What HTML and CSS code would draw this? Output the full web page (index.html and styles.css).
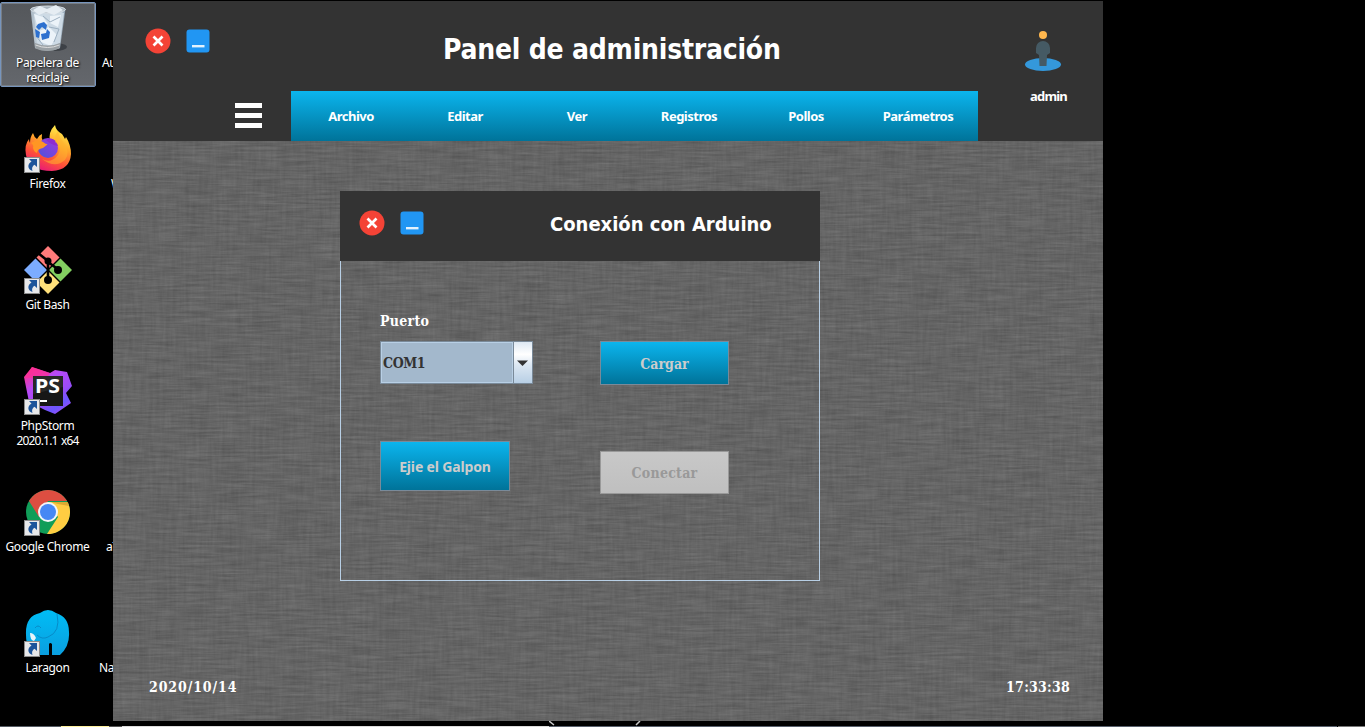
FILE: index.html
```html
<!DOCTYPE html>
<html lang="es">
<head>
<meta charset="utf-8">
<title>Panel de administración</title>
<link rel="stylesheet" href="styles.css">
</head>
<body>
<svg class="defs" width="0" height="0">
  <defs>
    <symbol id="shortcut" viewBox="0 0 16 16">
      <path d="M0 0h16v16H0z" fill="#8b8b8b"/><path d="M1 1h14v14H1z" fill="#e7e8ea"/>
      <path d="M5 2h8v8l-2.500-2.300C8.500 9 7.400 11 8.500 14 4 13 2.500 7.500 7.500 4.600z" fill="#1c549b"/>
    </symbol>
    <symbol id="close" viewBox="0 0 26 26">
      <circle cx="13" cy="13" r="12.500" fill="#f44336"/>
      <path d="M8.500 8.500l9 9M17.500 8.500l-9 9" stroke="#fff" stroke-width="2.700"/>
    </symbol>
    <symbol id="minimize" viewBox="0 0 24 24">
      <rect x=".5" y=".5" width="23" height="23" rx="3" fill="#2196f3"/>
      <path d="M6 17.200h12.500" stroke="#e3f2fd" stroke-width="2.400"/>
    </symbol>
    <linearGradient id="fox" x1=".75" y1="0" x2=".3" y2="1"><stop offset="0" stop-color="#fff44f"/><stop offset=".4" stop-color="#ffa52a"/><stop offset=".7" stop-color="#ff5138"/><stop offset="1" stop-color="#e6147e"/></linearGradient>
    <linearGradient id="globe" x1="0" y1="1" x2="1" y2="0"><stop offset="0" stop-color="#4a54dc"/><stop offset="1" stop-color="#a436dc"/></linearGradient>
    <linearGradient id="storm" x1=".2" y1="0" x2=".9" y2="1"><stop offset="0" stop-color="#ff318c"/><stop offset=".3" stop-color="#b74af7"/><stop offset=".6" stop-color="#9c4cf5"/><stop offset=".8" stop-color="#6b57ff"/><stop offset="1" stop-color="#b345f1"/></linearGradient>
    <linearGradient id="elephant" x1="0" y1="0" x2="0" y2="1"><stop offset="0" stop-color="#00bdf5"/><stop offset="1" stop-color="#0a9fe0"/></linearGradient>
    <linearGradient id="bin" x1="0" y1="0" x2="1" y2="0"><stop offset="0" stop-color="#a9b7c3"/><stop offset=".4" stop-color="#dfe8f0"/><stop offset="1" stop-color="#8fa1b1"/></linearGradient>
  </defs>
</svg>

<nav class="desktop">
  <div class="item selected">
    <svg class="icon" viewBox="0 0 48 48">
      <ellipse cx="31" cy="43" rx="12" ry="4" fill="#30353a" opacity=".7"/>
      <path d="M6.500 5L11 44q13 5 25 0l5.500-39z" fill="url(#bin)"/>
      <path d="M10 10l8-4 7 5 7-5 8 3-4 30-11 4-12-4z" fill="#cddae5"/>
      <path d="M10 10l9 3 5 7-10 5zM26 12l11-1-3 12-8-4zM15 27l10-4 8 8-6 11-10-4z" fill="#ecf3f9"/>
      <path d="M19 12l7 6 10-5M25 23l10 2-5 13M12 32l7 9" stroke="#9db0c1" fill="none"/>
      <path d="M14 20l6-2 3 3-1 5-4-3-3 3-3-3zM11 25l5 3-1 6-3-1zM17 30l5-1 1-4 3 3-1 6-7 2z" fill="#2d70cf"/>
      <ellipse cx="24" cy="5.500" rx="17.500" ry="3.500" fill="#a9b5bf" stroke="#d6dde3"/>
      <path d="M9 6l7-4 7 3 9-4 7 5-9 5-8-3-7 3z" fill="#e6edf3"/>
      <path d="M11 39q13 5 25 0l-.6 5.500q-12 5-24 0z" fill="#9aa0a4"/><path d="M11.500 41q12 5 24 0" stroke="#ddd" fill="none"/>
    </svg>
    <span class="name">Papelera de reciclaje</span>
  </div>
  <div class="item">
    <svg class="icon" viewBox="0 0 48 48">
      <path d="M9 8q1 4 4 6 2-4 5-5-1 4 1 7 4-1 7 0-2-9 5-16 1 6 7 9 2 3 3 5l1-2q5 8 5 17-1 16-19 17Q5 46 2 30 0 20 5 14q0 2 1 4 0-6 3-10z" fill="url(#fox)"/>
      <circle cx="24" cy="23" r="10" fill="url(#globe)"/>
      <path d="M7 18q7-5 12-1 4 3 5 2l-5 4q-6 1-6 5-3-1-4-5 1-3-2-5z" fill="#ff9624"/>
      <path d="M22 15q9-4 12 6l-4-1q-5-2-8-5z" fill="#8d2cd0"/>
      <path d="M31 17q8 5 3 13-7 9-16 4 13 10 23 1 6-8-2-18-4-5-5-11-4 5-3 11z" fill="#ffb52e" opacity=".55"/>
      <use href="#shortcut" y="32" width="16" height="16"/>
    </svg>
    <span class="name">Firefox</span>
  </div>
  <div class="item">
    <svg class="icon" viewBox="0 0 48 48">
      <path d="M24 0l11.500 11.500L24 23 12.500 11.500z" fill="#ff7b7b"/>
      <path d="M36.500 12.500L48 24 36.500 35.500 25 24z" fill="#82cf60"/>
      <path d="M11.500 12.500L23 24 11.500 35.500 0 24z" fill="#7cacff"/>
      <path d="M24 25l11.500 11.500L24 48 12.500 36.500z" fill="#ffe07a"/>
      <path d="M14 7l10 8v19M24 16l11 8" stroke="#000" stroke-width="2.600" fill="none"/>
      <circle cx="24" cy="15" r="3.500"/><circle cx="34" cy="24" r="4"/><circle cx="24" cy="34" r="4"/>
      <use href="#shortcut" y="32" width="16" height="16"/>
    </svg>
    <span class="name">Git Bash</span>
  </div>
  <div class="item">
    <svg class="icon" viewBox="0 0 48 48">
      <path d="M8 0l18 6 5-3 12 2 5 14-6 7 5 10-16 11-10-4-16-8L0 10z" fill="url(#storm)"/>
      <path d="M8 0l18 6-3 5H7L1 11z" fill="#fc2f98" opacity=".75"/>
      <path d="M9 9h30v30H9z" fill="#171717"/><path d="M9 9h30v11L9 27z" fill="#333" opacity=".6"/>
      <text class="logo-text" x="11" y="26" textLength="25" lengthAdjust="spacingAndGlyphs">PS</text><path d="M12 33h11v2H12z" fill="#fff"/>
      <use href="#shortcut" y="32" width="16" height="16"/>
    </svg>
    <span class="name">PhpStorm <span class="version">2020.1.1 x64</span></span>
  </div>
  <div class="item">
    <svg class="icon" viewBox="0 0 48 48">
      <circle cx="24" cy="24" r="22" fill="#109d58"/>
      <path d="M5 13A22 22 0 0 1 43 13H24L15 29z" fill="#dc4e41"/>
      <path d="M24 14h19.600A22 22 0 0 1 23 46l11-17z" fill="#ffcd42"/>
      <path d="M27 14h17l1 4-11-2z" fill="#b88a24" opacity=".5"/>
      <circle cx="24" cy="24" r="10" fill="#f3f5f7"/><circle cx="24" cy="24" r="8" fill="#4688f4"/>
      <use href="#shortcut" y="32" width="16" height="16"/>
    </svg>
    <span class="name">Google Chrome</span>
  </div>
  <div class="item">
    <svg class="icon" viewBox="0 0 48 48">
      <path d="M16 4q8-6 16 0 13 4 13 19 1 14-9 23h-8V35q-2-2-3 0v11H13Q2 41 2 26 1 7 16 4z" fill="url(#elephant)"/>
      <path d="M33 5q4 18-9 23-6 3-11-2M11 19q3-4 6 0" stroke="#078bc8" stroke-width="1" fill="none"/>
      <path d="M6 24q4 0 6 5l-2 3q-4-1-4-8z" fill="#e8f4fa"/>
      <use href="#shortcut" y="32" width="16" height="16"/>
    </svg>
    <span class="name">Laragon</span>
  </div>
</nav>
<span class="hidden-name n1">Au</span>
<span class="hidden-name n2">W</span>
<span class="hidden-name n3">aT</span>
<span class="hidden-name n4">Na</span>

<main class="panel">
  <svg class="fabric" width="990" height="580">
    <filter id="weave" x="0" y="0" width="100%" height="100%" color-interpolation-filters="sRGB">
      <feTurbulence type="fractalNoise" baseFrequency=".03 .45" numOctaves="4" seed="4" result="h"/>
      <feColorMatrix in="h" type="matrix" values=".2 0 0 0 .295  .2 0 0 0 .295  .2 0 0 0 .295  0 0 0 0 1" result="hg"/>
      <feTurbulence type="fractalNoise" baseFrequency=".3 .03" numOctaves="4" seed="9" result="v"/>
      <feColorMatrix in="v" type="matrix" values=".13 0 0 0 .33  .13 0 0 0 .33  .13 0 0 0 .33  0 0 0 0 1" result="vg"/>
      <feComposite in="hg" in2="vg" operator="arithmetic" k2=".6" k3=".4"/>
    </filter>
    <rect width="990" height="580" filter="url(#weave)"/>
  </svg>
  <header class="panel-head">
    <div class="top-row">
      <div class="controls">
        <svg width="26" height="26"><use href="#close"/></svg>
        <svg width="24" height="24"><use href="#minimize"/></svg>
      </div>
      <h1 class="title">Panel de administración</h1>
    </div>
    <div class="user">
      <svg width="38" height="42" viewBox="0 0 38 42">
        <ellipse cx="19" cy="34.500" rx="18" ry="6.500" fill="#3498db"/>
        <circle cx="19" cy="5" r="4" fill="#ffb74d"/>
        <path d="M12 18a7 7 0 0 1 14 0v5l-3 2-.5 11h-7L15 25l-3-2z" fill="#455a64"/>
      </svg>
      <span>admin</span>
    </div>
    <div class="nav-row">
      <svg class="burger" width="27" height="25"><path d="M0 0h27v5H0zM0 10h27v5H0zM0 20h27v5H0z" fill="#fff"/></svg>
      <ul class="menu">
        <li>Archivo</li><li>Editar</li><li>Ver</li><li>Registros</li><li>Pollos</li><li>Parámetros</li>
      </ul>
    </div>
  </header>

  <section class="dialog">
    <header class="dialog-head">
      <div class="controls">
        <svg width="26" height="26"><use href="#close"/></svg>
        <svg width="24" height="24"><use href="#minimize"/></svg>
      </div>
      <h2 class="dialog-title">Conexión con Arduino</h2>
    </header>
    <div class="form">
      <label class="label">Puerto</label>
      <div class="combo"><span class="value">COM1</span><span class="arrow"><svg width="11" height="6"><path d="M0 .5h11L5.500 6z" fill="#333"/></svg></span></div>
      <button class="btn load">Cargar</button>
      <button class="btn shed">Ejie el Galpon</button>
      <button class="btn connect" disabled>Conectar</button>
    </div>
  </section>

  <footer class="status"><span class="date">2020/10/14</span><span class="time">17:33:38</span></footer>
</main>

<div class="taskbar"></div>
<svg class="start-orb" width="92" height="5"><path d="M0 0l5 4M91 0l-4 4" stroke="#c8c8c8" stroke-width="1.500"/></svg>
</body>
</html>
```
FILE: styles.css
```css
* { box-sizing: border-box; }
body { margin: 0; width: 1365px; height: 727px; overflow: hidden; position: relative; background: #000; color: #fff; font-family: "Noto Sans", sans-serif; }
.defs { position: absolute; }
h1, h2, ul { margin: 0; padding: 0; }

.desktop { width: 96px; padding-top: 2px; display: flex; flex-direction: column; gap: 36px; }
.item { height: 85px; padding-top: 2px; display: flex; flex-direction: column; align-items: center; }
.selected { border: 1px solid #7795bd; border-radius: 2px; background: linear-gradient(#54575b, #64676c); box-shadow: inset 0 0 0 1px #777d84; padding-top: 1px; }
.icon { width: 48px; height: 48px; flex: none; }
.name { width: 90px; margin: 3px 1px 0 0; text-align: center; font-size: 12px; line-height: 15px; letter-spacing: -.35px; text-shadow: 1px 1px 2px #000; }
.version { letter-spacing: -.8px; word-spacing: 1px; white-space: nowrap; }
.logo-text { font-family: "Noto Sans", sans-serif; font-weight: 700; font-size: 19px; letter-spacing: 0; fill: #fff; }
.hidden-name { position: absolute; font-size: 12px; line-height: 15px; letter-spacing: -.3px; }
.n1 { left: 102px; top: 55px; }
.n2 { left: 111px; top: 176px; }
.n3 { left: 106px; top: 539px; }
.n4 { left: 99px; top: 660px; }

.panel { position: absolute; left: 113px; top: 1px; width: 990px; height: 720px; overflow: hidden; background: #666; display: flex; flex-direction: column; }
.fabric { position: absolute; left: 0; top: 140px; }
.panel-head { height: 140px; background: #333; display: grid; grid-template-columns: 865px 125px; grid-template-rows: 90px 50px; }
.top-row { display: flex; align-items: flex-start; padding: 27px 0 0 32px; }
.controls { display: flex; align-items: center; gap: 15px; flex: none; }
.title { margin: 2px 0 0 233px; font: bold 28px/40px "DejaVu Sans Condensed", "DejaVu Sans", sans-serif; letter-spacing: -.22px; white-space: nowrap; }
.user { grid-column: 2; grid-row: 1 / 3; padding: 29px 0 0 46px; font: bold 13px/18px "Noto Sans", sans-serif; letter-spacing: -.8px; display: flex; flex-direction: column; gap: 15px; }
.user span { padding-left: 6px; }
.nav-row { display: flex; grid-column: 1; }
.burger { margin: 12px 29px 0 122px; flex: none; }
.menu { width: 687px; height: 50px; list-style: none; background: linear-gradient(#0bb5ee, #007399); display: grid; grid-template-columns: 120px 108px 116px 108px 126px 98px; align-items: center; text-align: center; font: bold 13px/18px "Noto Sans", sans-serif; letter-spacing: -.5px; }

.dialog { position: relative; width: 480px; height: 390px; margin: 50px 0 0 227px; border: 1px solid #b8cfe5; border-top: 0; }
.dialog-head { height: 70px; margin: 0 -1px; background: #333; display: flex; align-items: flex-start; padding: 19px 0 0 19px; }
.dialog-title { margin-left: 126px; font: bold 20px/28px "DejaVu Sans Condensed", "DejaVu Sans", sans-serif; white-space: nowrap; }
.form { padding: 50px 39px 0; display: grid; grid-template-columns: 220px 129px; grid-template-rows: 30px 100px 50px; font: bold 14px/20px "DejaVu Serif Condensed", "DejaVu Serif", serif; align-items: start; }
.label { grid-column: 1 / 3; letter-spacing: .3px; }
.combo { width: 153px; height: 43px; border: 1px solid #7a8a99; display: flex; }
.value { flex: 1; border: 1px solid #b8cfe5; background: #a3b8cc; color: #333; padding: 0 1px; line-height: 40px; letter-spacing: -.4px; }
.arrow { width: 19px; border-left: 1px solid #7a8a99; background: linear-gradient(#dde8f3, #fff 30%, #dde8f3 55%, #b8cfe5); display: flex; align-items: center; justify-content: center; }
.arrow svg { margin-right: 1px; }
.btn { padding: 0; border: 1px solid #7a8a99; background: linear-gradient(#0bb5ee, #007399); color: #ccc; font: inherit; white-space: nowrap; }
.load { width: 129px; height: 44px; padding-top: 1px; }
.shed { width: 130px; height: 50px; padding-top: 2px; font-family: "Noto Sans", sans-serif; letter-spacing: -.15px; }
.connect { width: 129px; height: 43px; margin-top: 10px; background: linear-gradient(#c8c8c8, #bfbfbf); border-color: #999; color: #999; letter-spacing: .25px; }

.status { position: relative; margin-top: auto; padding: 0 33px 24px 36px; display: flex; justify-content: space-between; font: bold 14px/20px "DejaVu Serif Condensed", "DejaVu Serif", serif; }
.date { letter-spacing: .9px; }
.time { letter-spacing: .25px; }
.taskbar { position: absolute; left: 0; bottom: 0; width: 1365px; height: 1px; background: linear-gradient(90deg, #555b63 61px, #fff2a0 61px 109px, #555 109px 122px, #ddd 122px 549px, #59616d 549px 1337px, #000 1337px 1338px, #777 1338px); }
.start-orb { position: absolute; left: 549px; top: 721px; }
```
